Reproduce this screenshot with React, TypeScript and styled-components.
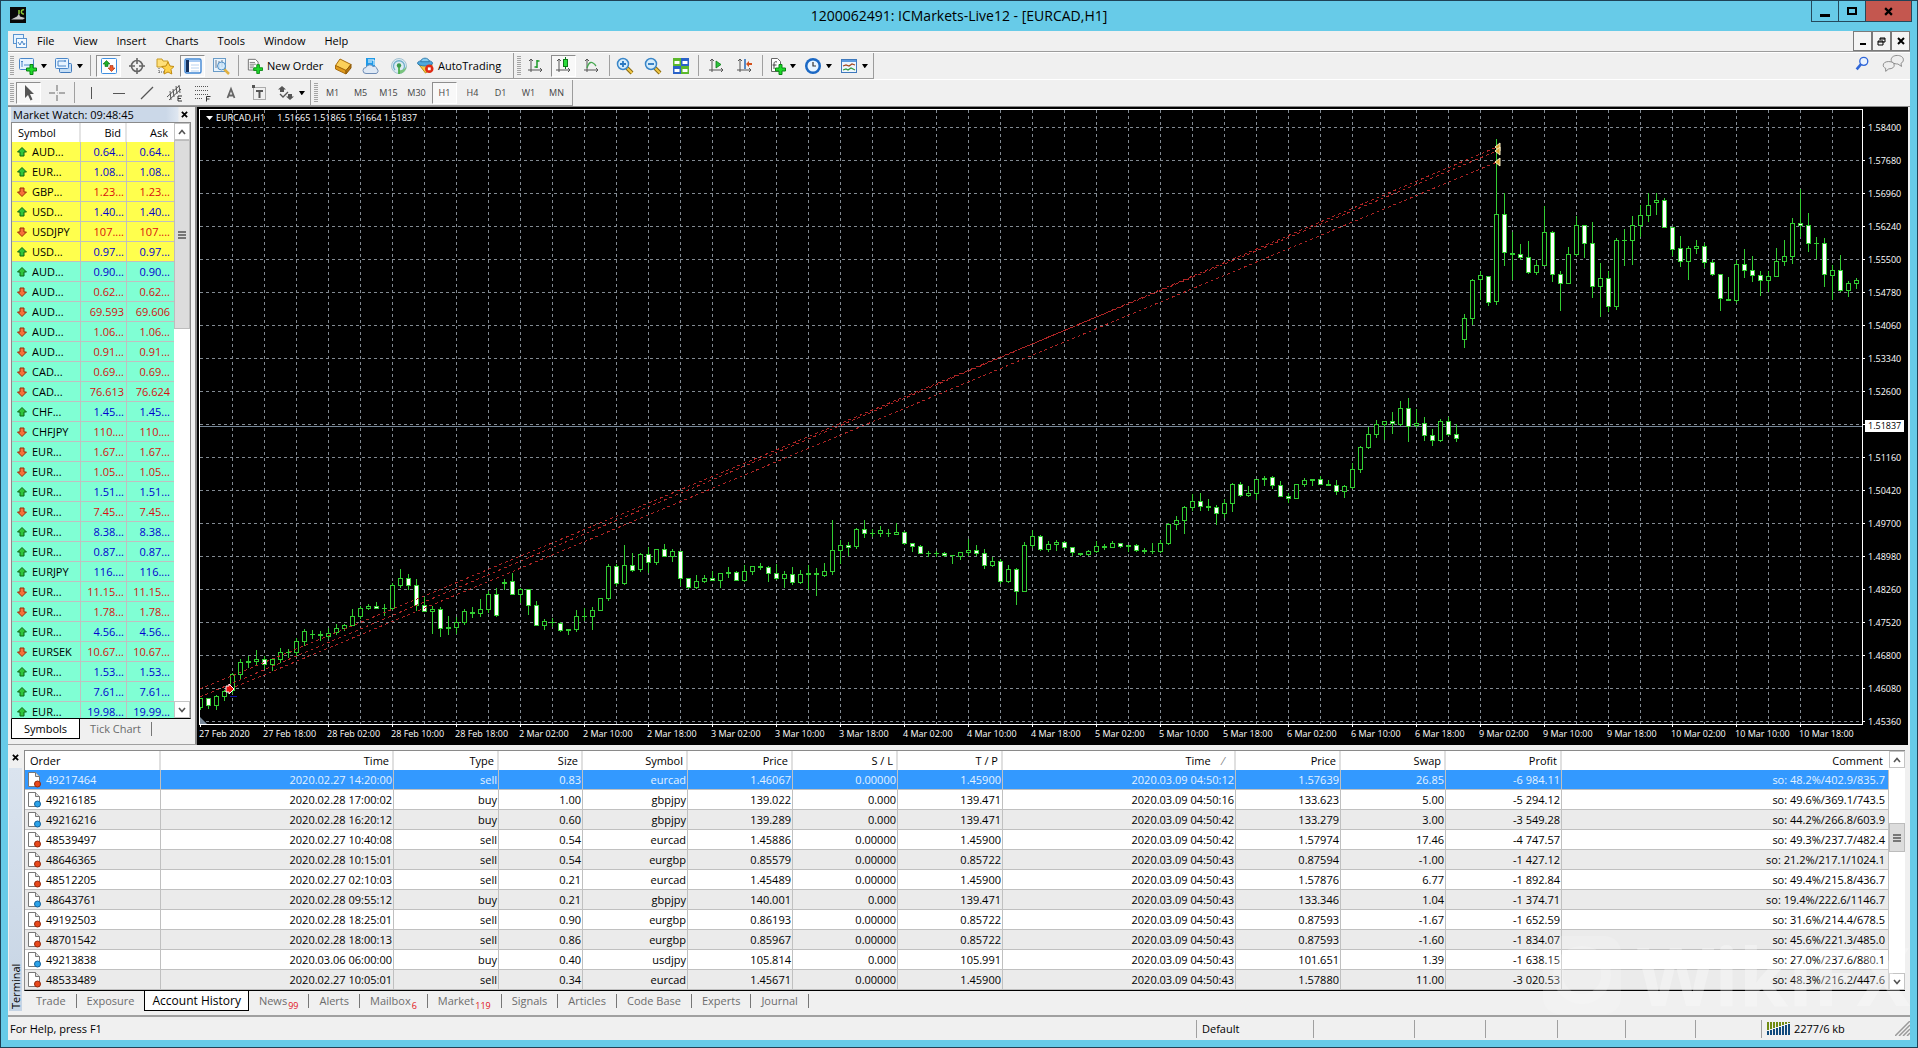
import React from "react";
import styled, { createGlobalStyle, css } from "styled-components";

const GlobalStyle = createGlobalStyle`
  *, *::before, *::after { box-sizing: border-box; }
  body {
    margin: 0;
    font-family: "Open Sans", "Noto Sans", sans-serif;
    font-size: 11px;
    line-height: 16px;
    color: #000;
    background: #67cbe8;
  }
  button { font: inherit; color: inherit; padding: 0; border: 0; background: none; }
`;

/* ---------- window ---------- */

const AppWindow = styled.div`
  height: 100vh;
  display: flex;
  flex-direction: column;
  background: #67cbe8;
  border: 1px solid #1f4256;
  padding: 0 7px 7px;
  overflow: hidden;
`;

const TitleBar = styled.header`
  display: grid;
  grid-template-columns: 1fr auto 1fr;
  align-items: start;
  height: 30px;
  flex: none;
`;

const AppLogo = styled.svg`
  margin: 6px 0 0 2px;
`;

const WindowTitle = styled.h1`
  margin: 0;
  font-size: 14px;
  font-weight: 400;
  line-height: 30px;
`;

const CaptionButtons = styled.div`
  display: flex;
  justify-self: end;
  margin-right: -2px;
`;

const CaptionButton = styled.button<{ $wide?: boolean }>`
  width: ${(p) => (p.$wide ? 47 : 28)}px;
  height: 21px;
  display: flex;
  align-items: center;
  justify-content: center;
  border: 1px solid #24495c;
  border-top: 0;
  margin-left: -1px;
  background: ${(p) => (p.$wide ? "#c4574f" : "transparent")};
`;

const Client = styled.div`
  flex: 1;
  min-height: 0;
  display: flex;
  flex-direction: column;
  background: #f0f0f0;
  position: relative;
`;

/* ---------- menu ---------- */

const MenuBar = styled.nav`
  display: flex;
  align-items: center;
  gap: 1px;
  height: 21px;
  flex: none;
  padding-left: 5px;
  border-bottom: 1px solid #9c9c9c;
`;

const MenuItem = styled.button`
  padding: 0 9px;
`;

const ChildButtons = styled.div`
  display: flex;
  margin-left: auto;
`;

const ChildButton = styled.button`
  width: 19px;
  height: 20px;
  display: flex;
  align-items: center;
  justify-content: center;
  border: 1px solid #7a7a7a;
  background: #f4f4f4;
`;

/* ---------- toolbars ---------- */

const ToolRow = styled.div`
  display: flex;
  height: 27px;
  flex: none;
  border-top: 1px solid #fff;
`;

const ToolGroup = styled.div`
  display: flex;
  align-items: center;
  padding-left: 3px;
  border-right: 1px solid #9c9c9c;
  border-bottom: 1px solid #9c9c9c;
  &:first-child { padding-left: 2px; }
`;

const Grip = styled.span`
  width: 4px;
  height: 19px;
  margin-right: 2px;
  background: repeating-linear-gradient(#a4a4a4 0 1px, #f0f0f0 1px 2px);
`;

const Divider = styled.span<{ $after?: number }>`
  width: 1px;
  height: 21px;
  margin: 0 ${(p) => p.$after ?? 5}px 0 2px;
  background: #a0a0a0;
`;

const pressed = css`
  border: 1px solid #8e8e8e;
  border-right-color: #fff;
  border-bottom-color: #fff;
  background: #f8f8f8;
`;

const ToolButton = styled.button<{ $on?: boolean; $label?: number; $menu?: boolean }>`
  width: ${(p) => p.$label ?? (p.$menu ? 33 : 25)}px;
  height: 22px;
  margin-right: 3px;
  display: flex;
  align-items: center;
  justify-content: ${(p) => (p.$label ? "flex-start" : "center")};
  gap: ${(p) => (p.$label ? 4 : 3)}px;
  padding-left: ${(p) => (p.$label ? 2 : 0)}px;
  border: 1px solid transparent;
  white-space: nowrap;
  ${(p) => p.$on && pressed}
`;

const PeriodButton = styled(ToolButton)`
  font-size: 9px;
  color: #444;
`;

const ToolsEnd = styled.div`
  margin-left: auto;
  display: flex;
  align-items: center;
  gap: 12px;
  padding-right: 6px;
`;

/* ---------- work area ---------- */

const Workspace = styled.div`
  flex: 1;
  min-height: 0;
  display: flex;
  border-top: 1px solid #8a8a8a;
`;

const WatchPanel = styled.section`
  width: 189px;
  flex: none;
  display: flex;
  flex-direction: column;
  padding: 0 4px 5px 3px;
  border-right: 2px solid #8a8a8a;
  border-bottom: 1px solid #a0a0a0;
`;

const WatchTitle = styled.div`
  display: flex;
  align-items: center;
  justify-content: space-between;
  height: 15px;
  flex: none;
  padding: 0 1px 0 2px;
  background: linear-gradient(90deg, #cbd8e8 0 155px, #dfe7f1 167px, #f0f0f0 168px);
  h2 { margin: 0; font-size: 11px; font-weight: 400; }
`;

const CloseButton = styled.button`
  width: 11px;
  height: 14px;
  display: flex;
  align-items: center;
  justify-content: center;
`;

const WatchBody = styled.div`
  flex: 1;
  min-height: 0;
  display: flex;
  border: 1px solid #8a8a8a;
  border-bottom: 1px solid #000;
`;

const WatchScroller = styled.div`
  flex: 1;
  overflow: hidden;
`;

const WatchTable = styled.table`
  width: 100%;
  table-layout: fixed;
  border-collapse: separate;
  border-spacing: 0;
  th {
    height: 19px;
    padding: 0 4px 0 6px;
    font-weight: 400;
    text-align: right;
    background: #fff;
    border-right: 2px solid #e4e4e4;
  }
  th:first-child { text-align: left; }
  th:last-child { border-right: 0; padding-right: 6px; }
`;

const WatchRow = styled.tr<{ $group: "major" | "cross"; $up: boolean }>`
  background: ${(p) => (p.$group === "major" ? "#ffff4d" : "#80ffd4")};
  td {
    height: 20px;
    padding: 0 2px 0 0;
    text-align: right;
    line-height: 18px;
    border-right: 1px solid #c0c0c0;
    border-bottom: 1px solid #c0c0c0;
    color: ${(p) => (p.$up ? "#0000d0" : "#d81010")};
  }
  td:first-child { color: #000; }
  td:last-child { border-right: 0; padding-right: 4px; }
`;

const SymbolCell = styled.span`
  display: flex;
  align-items: center;
  gap: 4px;
  padding-left: 4px;
`;

const ScrollBar = styled.div`
  width: 16px;
  flex: none;
  display: flex;
  flex-direction: column;
  background: #fff;
`;

const ScrollButton = styled.button`
  height: 17px;
  flex: none;
  display: flex;
  align-items: center;
  justify-content: center;
  background: #fff;
  border: 1px solid #c4c4c4;
`;

const Thumb = styled.div<{ $size: number }>`
  height: ${(p) => p.$size}px;
  flex: none;
  display: flex;
  align-items: center;
  justify-content: center;
  background: #dcdcdc;
  border: 1px solid #bcbcbc;
`;

const Track = styled.div<{ $grow?: number }>`
  flex: ${(p) => p.$grow ?? 1};
`;

const WatchTabs = styled.div`
  display: flex;
  align-items: center;
  height: 20px;
  flex: none;
  color: #6c6c6c;
`;

const WatchTab = styled.button<{ $active?: boolean }>`
  height: 20px;
  padding: 0 10px;
  ${(p) =>
    p.$active &&
    css`
      color: #000;
      background: #fff;
      border: 1px solid #000;
      border-top: 0;
      padding: 0 12px;
    `}
`;

const TabRule = styled.span`
  width: 1px;
  height: 14px;
  background: #777;
`;

/* ---------- chart ---------- */

const ChartFrame = styled.section`
  flex: 1;
  min-width: 0;
  margin-right: 2px;
  display: grid;
  grid-template-columns: minmax(0, 1fr) 45px;
  grid-template-rows: minmax(0, 1fr) 20px;
  padding: 2px 0 0 2px;
  background: #000;
  color: #fff;
  font-size: 9px;
  overflow: hidden;
`;

const Plot = styled.div`
  position: relative;
  border: 1px solid #fff;
  min-height: 0;
  overflow: hidden;
  > svg { display: block; width: 100%; height: 100%; }
`;

const PlotCaption = styled.div`
  position: absolute;
  top: 0;
  left: 6px;
  display: flex;
  align-items: center;
  gap: 3px;
  span + span { margin-left: 9px; }
`;

const PriceAxis = styled.ol`
  grid-row: 1 / span 2;
  grid-column: 2;
  position: relative;
  margin: 0;
  padding: 2px 0 0;
  list-style: none;
  li {
    display: flex;
    align-items: center;
    gap: 3px;
    height: 33px;
  }
  li::before { content: ""; width: 2px; height: 1px; background: #fff; }
`;

const PriceTag = styled.output`
  position: absolute;
  left: 2px;
  top: 311px;
  width: 39px;
  height: 12px;
  padding-left: 3px;
  line-height: 12px;
  background: #fff;
  color: #000;
`;

const TimeAxis = styled.ol`
  margin: 0;
  padding: 0;
  list-style: none;
  display: flex;
  overflow: hidden;
  line-height: 14px;
  li {
    flex: none;
    width: 64px;
    white-space: nowrap;
  }
  li::before { content: ""; display: block; width: 1px; height: 2px; margin-left: 1px; background: #fff; }
`;

/* ---------- terminal ---------- */

const TerminalPanel = styled.section`
  flex: none;
  display: flex;
  margin-top: 5px;
  padding: 0 5px 4px 1px;
  border-bottom: 2px solid #a0a0a0;
`;

const TerminalRail = styled.div`
  width: 13px;
  flex: none;
  display: flex;
  flex-direction: column;
  align-items: center;
  margin-right: 2px;
`;

const RailLabel = styled.h2`
  flex: 1;
  width: 100%;
  margin: 4px 0 0;
  display: flex;
  align-items: center;
  writing-mode: vertical-rl;
  transform: rotate(180deg);
  font-size: 11px;
  font-weight: 400;
  line-height: 13px;
  padding-top: 2px;
  background: linear-gradient(#c6d4e4, #dbe4ef);
`;

const TerminalMain = styled.div`
  flex: 1;
  min-width: 0;
`;

const TerminalBody = styled.div`
  display: flex;
  border-top: 1px solid #8a8a8a;
  border-left: 1px solid #8a8a8a;
  border-bottom: 1px solid #000;
`;

const HistoryTable = styled.table`
  flex: 1;
  width: 100%;
  min-width: 0;
  table-layout: fixed;
  border-collapse: separate;
  border-spacing: 0;
  th {
    height: 19px;
    padding: 0 3px 0 5px;
    font-weight: 400;
    text-align: right;
    background: #fff;
    border-right: 2px solid #e0e0e0;
    white-space: pre;
  }
  th:first-child { text-align: left; }
  th:last-child { border-right: 0; padding-right: 6px; }
`;

const HistoryRow = styled.tr<{ $selected: boolean; $shade: boolean }>`
  background: ${(p) => (p.$selected ? "#3399ff" : p.$shade ? "#ebebeb" : "#fff")};
  color: ${(p) => (p.$selected ? "#e4f2ff" : "#000")};
  td {
    height: 20px;
    padding: 0 1px 0 2px;
    line-height: 18px;
    text-align: right;
    white-space: nowrap;
    border-right: 1px solid #c0c0c0;
    border-bottom: 1px solid #c0c0c0;
  }
  td:last-child { padding-right: 3px; }
`;

const OrderCell = styled.span`
  display: flex;
  align-items: center;
  gap: 4px;
  svg { flex: none; }
`;

const SortMark = styled.span`
  margin: 0 7px 0 12px;
  color: #777;
`;

const TerminalTabs = styled.div`
  display: flex;
  align-items: center;
  height: 20px;
  padding-left: 2px;
  color: #6c6c6c;
`;

const TerminalTab = styled.button<{ $active?: boolean }>`
  height: 20px;
  padding: 0 10px;
  display: flex;
  align-items: center;
  sub { font-size: 9px; line-height: 9px; margin-top: 8px; margin-left: 1px; color: #e01020; }
  ${(p) =>
    p.$active &&
    css`
      font-size: 12px;
      color: #000;
      background: #fff;
      border: 1px solid #000;
      border-top: 0;
      padding: 0 7px;
    `}
`;

const StatusBar = styled.footer`
  flex: none;
  display: flex;
  align-items: center;
  height: 23px;
  padding-left: 2px;
`;

const StatusCell = styled.div<{ $width?: number }>`
  ${(p) => (p.$width ? `width: ${p.$width}px; flex: none;` : "flex: 1;")}
  height: 18px;
  display: flex;
  align-items: center;
  gap: 4px;
  & + & { border-left: 1px solid #a0a0a0; padding-left: 5px; }
`;

const ResizeHandle = styled.svg`
  margin-left: auto;
`;

const Watermark = styled.div`
  position: absolute;
  right: 0;
  bottom: 25px;
  display: flex;
  align-items: center;
  gap: 16px;
  color: #fff;
  opacity: 0.3;
  font-size: 80px;
  font-weight: 700;
  line-height: 80px;
  pointer-events: none;
`;

/* ---------- icons ---------- */

type IconName =
  | "newChart" | "profiles" | "watch" | "navigator" | "favorites" | "terminal" | "tester"
  | "order" | "gold" | "cloud" | "signal" | "robot" | "bars" | "candles" | "line"
  | "zoomIn" | "zoomOut" | "tiles" | "scroll" | "shift" | "indicator" | "clock" | "template"
  | "pointer" | "cross" | "vline" | "hline" | "trend" | "channel" | "fibo" | "text" | "label" | "arrows"
  | "search" | "chat";

const plus = <path d="M11 7.500h3v3.500h3.500v3H14v3.500h-3V14H7.500v-3H11z" fill="#1ed82a" stroke="#088512" />;
const axes = <path d="M4 2v13M1 13h14M2 4l2-2 2 2M13 11l2 2-2 2" fill="none" stroke="#555" />;
const lens = (
  <>
    <path d="M11 11l5 5" stroke="#8a6a10" strokeWidth="4" />
    <path d="M11 11l5 5" stroke="#f2c94a" strokeWidth="2" />
    <circle cx="7" cy="7" r="5.5" fill="#d5edfc" stroke="#3a86c8" strokeWidth="1.5" />
  </>
);

const ICONS: Record<IconName, React.ReactNode> = {
  newChart: (
    <>
      <rect x="0.5" y="1.5" width="14" height="11" rx="1" fill="#e6f3ff" stroke="#4a86c8" />
      <path d="M3 4v6M2 5l1-1 1 1M5 8h7" fill="none" stroke="#4a86c8" />
      {plus}
    </>
  ),
  profiles: (
    <>
      <rect x="4.5" y="6.5" width="12" height="9" rx="1" fill="#c5def5" stroke="#3f79bc" />
      <rect x="0.5" y="1.5" width="13" height="10" rx="1" fill="#e6f3ff" stroke="#4a86c8" />
      <path d="M3 4h8M3 9h8M3 4v5M10 3v2" fill="none" stroke="#4a86c8" />
    </>
  ),
  watch: (
    <>
      <rect x="1.5" y="1.5" width="15" height="15" rx="1" fill="#fff" stroke="#3f8fe0" />
      <path d="M6.500 3.500l3.500 3.500H8v2.500H5V7H3z" fill="#1fae2b" stroke="#0b6c12" strokeWidth="0.6" />
      <path d="M11.500 14.500L8 11h2V8.500h3V11h2z" fill="#ef5a2a" stroke="#a12a08" strokeWidth="0.6" />
    </>
  ),
  navigator: (
    <g fill="none" stroke="#666" strokeWidth="1.6">
      <circle cx="9" cy="9" r="5.5" />
      <path d="M9 1v6M9 11v6M1 9h6M11 9h6" />
    </g>
  ),
  favorites: (
    <>
      <path d="M1 2h5l1 2h5v6H1z" fill="#ffe07a" stroke="#c79a22" />
      <path d="M3 11v5M3 15h5" fill="none" stroke="#555" strokeDasharray="1 1" />
      <path d="M12 5l2 4 4 .5-3 3 .8 4.500L12 15l-4 2 .8-4.500-3-3L10 9z" fill="#ffd24a" stroke="#c08a10" />
    </>
  ),
  terminal: (
    <>
      <rect x="1" y="2" width="16" height="14" rx="1.5" fill="#fff" stroke="#3f86d4" strokeWidth="1.4" />
      <rect x="2" y="3" width="3" height="12" fill="#16305c" />
      <path d="M5 4h11" stroke="#8ab8ee" strokeWidth="1.500" />
      <path d="M7 8h8M7 11h8M7 14h8" stroke="#b8d2f0" />
    </>
  ),
  tester: (
    <>
      <rect x="1.500" y="1.500" width="12" height="13" fill="#e9f4fd" stroke="#6a9cc8" />
      <path d="M4 3v8M7 4v8M10 3v7" stroke="#6a7f94" />
      <path d="M12 12l5 5" stroke="#e0b040" strokeWidth="2.500" />
      <circle cx="9.500" cy="9" r="4" fill="#cfe8fb" fillOpacity="0.8" stroke="#4f90c8" />
    </>
  ),
  order: (
    <>
      <path d="M1.500 1.500h8l3 3v9h-11z" fill="#fff" stroke="#666" />
      <path d="M3 5h6M3 7h7M3 9h5M3 11h4" stroke="#777" />
      {plus}
    </>
  ),
  gold: (
    <>
      <path d="M1.500 8.500L6 2l11 5.500-5 6z" fill="#fbd05a" stroke="#a86c0c" />
      <path d="M1.500 8.500l10.500 5v3.500L1.500 12z" fill="#e09a1c" stroke="#a86c0c" />
      <path d="M12 13.500l5-6V11l-5 6z" fill="#b8760c" stroke="#8c5808" />
    </>
  ),
  cloud: (
    <>
      <path d="M4 1h9v9H4z" fill="#1f9ae8" />
      <path d="M6 3h6M6 5h4M12 3v5" stroke="#fff" />
      <path d="M4 16.500a3 3 0 0 1 0-6 4 4 0 0 1 7-1 3 3 0 0 1 4 2.500 2.500 2.500 0 0 1-1 4.500z" fill="#dfe9f5" stroke="#6f8db6" />
    </>
  ),
  signal: (
    <g fill="none">
      <circle cx="9" cy="9" r="7.500" fill="#dcebf2" stroke="#a4c2d2" />
      <path d="M5 13a5.500 5.500 0 1 1 8 0" stroke="#6faecb" strokeWidth="1.300" />
      <path d="M9 17a8 8 0 0 0 7.500-8A7 7 0 0 1 9 13z" fill="#79c47c" />
      <path d="M9 9v8" stroke="#4cb04c" strokeWidth="1.800" />
      <circle cx="9" cy="8.500" r="2.200" fill="#3b9a4a" />
    </g>
  ),
  robot: (
    <>
      <path d="M2 8l7 9 6-4 1-5z" fill="#f6c840" stroke="#b88a10" />
      <ellipse cx="8.500" cy="6.500" rx="8" ry="3" fill="#4fa8dc" stroke="#2a78ac" />
      <path d="M4 5c0-5 9-5 9 0z" fill="#86ccf0" stroke="#2a78ac" />
      <circle cx="13" cy="12.500" r="4.500" fill="#e02a14" />
      <rect x="11.500" y="11" width="3" height="3" fill="#fff" />
    </>
  ),
  bars: <>{axes}<path d="M10 3v8M10 4h2.500M7.500 10H10" stroke="#1c9a28" strokeWidth="1.500" /></>,
  candles: <>{axes}<path d="M10.500 0v12" stroke="#0d7a18" /><rect x="8.500" y="2.500" width="4" height="7" fill="#2bdc3a" stroke="#0d7a18" /></>,
  line: <>{axes}<path d="M4 11c2-7 5-7 9-2" fill="none" stroke="#46a850" strokeWidth="1.300" /></>,
  zoomIn: <>{lens}<path d="M7 4v6M4 7h6" stroke="#2a78c0" strokeWidth="1.800" /></>,
  zoomOut: <>{lens}<path d="M4 7h6" stroke="#2a78c0" strokeWidth="1.800" /></>,
  tiles: (
    <>
      <path d="M1 1h8v8H1zM9 9h8v8H9z" fill="#5cb82c" />
      <path d="M9 1h8v8H9zM1 9h8v8H1z" fill="#2a62c8" />
      <path d="M2.500 5.500h5M10.500 5.500h5M2.500 13.500h5M10.500 13.500h5" stroke="#fff" strokeWidth="3" />
    </>
  ),
  scroll: <>{axes}<path d="M8 4l5 3.500-5 3.500z" fill="#2bc43a" stroke="#0d7a18" strokeWidth="0.800" /></>,
  shift: <>{axes}<path d="M9 2v10" stroke="#2468b8" strokeWidth="1.500" /><path d="M10 7l3-3v2h3v2h-3v2z" fill="#d4501a" /></>,
  indicator: (
    <>
      <path d="M3.500 1.500h6l3 3v10h-9z" fill="#fff" stroke="#666" />
      <path d="M9 5c-3-1-3 1-3 3v4M4.500 8h4" fill="none" stroke="#444" />
      {plus}
    </>
  ),
  clock: (
    <>
      <circle cx="9" cy="9" r="8" fill="#1b68c4" />
      <circle cx="9" cy="9" r="5.500" fill="#e8f4ff" />
      <path d="M9 5v4h3" fill="none" stroke="#333" strokeWidth="1.200" />
    </>
  ),
  template: (
    <>
      <rect x="1.500" y="2.500" width="15" height="13" fill="#eef6fd" stroke="#3f79bc" />
      <path d="M2 4h14" stroke="#5a9ae0" strokeWidth="2" />
      <path d="M3 9l3-1 3 1 3-2 3 1" fill="none" stroke="#a04820" strokeWidth="1.200" />
      <path d="M3 13l3-1 2 1 3-2 4 2" fill="none" stroke="#2c9a3a" strokeWidth="1.200" />
    </>
  ),
  pointer: <path d="M5 1v13l3-3 2.500 5.500 2-1L10 10h4z" fill="#555" />,
  cross: <path d="M9 1v6M9 11v6M1 9h6M11 9h6M9 9h.5" stroke="#666" />,
  vline: <path d="M9.500 3v12" stroke="#555" />,
  hline: <path d="M3 9.500h12" stroke="#555" />,
  trend: <path d="M3 15L15 3" stroke="#555" strokeWidth="1.200" />,
  channel: (
    <>
      <path d="M1 13L13 2M3 16L15 5M4 7l1 9M7 5l1 8M10 2l1 8M13 1l1 8" stroke="#555" fill="none" />
      <path d="M16 12h-4v5h4M12 14.500h3" fill="none" stroke="#333" />
    </>
  ),
  fibo: (
    <>
      <path d="M1 2.500h14M1 6.500h14M1 10.500h14M1 14.500h8" stroke="#555" strokeDasharray="1 1" />
      <path d="M12.500 17.500v-5h4M12.500 15h3" fill="none" stroke="#333" />
    </>
  ),
  text: <path d="M5.500 14L9 5l3.500 9M6.500 11.500h5" fill="none" stroke="#666" strokeWidth="1.800" />,
  label: (
    <>
      <rect x="3.500" y="3.500" width="12" height="12" fill="none" stroke="#666" strokeDasharray="1 1" />
      <path d="M6 7h7M9.500 7v7" stroke="#555" strokeWidth="2" />
      <path d="M2 1h3v3H2z" fill="#555" />
    </>
  ),
  arrows: (
    <>
      <path d="M5 2l4 3.500H7V8H3V5.500H1z" fill="#555" />
      <path d="M3 10l3 3 5-5" fill="none" stroke="#555" strokeWidth="1.300" />
      <path d="M13 16l-4-3.500h2V10h4v2.500h2z" fill="#555" />
    </>
  ),
  search: (
    <g fill="none" stroke="#2f66d8">
      <circle cx="11" cy="6" r="4.500" fill="#eaf3ff" strokeWidth="1.500" />
      <path d="M8 9l-5 6" strokeWidth="3" />
    </g>
  ),
  chat: (
    <g fill="#eee" stroke="#8a8a8a" strokeWidth="0.800">
      <path d="M12.500 2c3 0 5 1.500 5 3.500 0 1.500-1 2.500-2 3l.5 2.500-3-2c-3.500 0-5.500-1.500-5.500-3.500s2-3.500 5-3.500z" />
      <path d="M5.500 7c3 0 4.500 1.300 4.500 3s-1.500 3-4.500 3L3 15v-2.500c-1.500-.5-2-1.500-2-2.500 0-1.700 1.500-3 4.500-3z" />
    </g>
  ),
};

function Icon({ name, size = 18 }: { name: IconName; size?: number }) {
  return (
    <svg width={size} height={size} viewBox="0 0 18 18" aria-hidden="true">
      {ICONS[name]}
    </svg>
  );
}

function Caret() {
  return (
    <svg width="7" height="4" viewBox="0 0 7 4" aria-hidden="true">
      <path d="M1 0h6L4 4H3.500z" fill="#000" />
    </svg>
  );
}

function CrossMark({ size = 8, weight = 2 }: { size?: number; weight?: number }) {
  return (
    <svg width={size} height={size} viewBox="0 0 8 8" aria-hidden="true">
      <path d="M1 1l6 6M7 1L1 7" stroke="#000" strokeWidth={weight} />
    </svg>
  );
}

function Chevron({ down }: { down?: boolean }) {
  return (
    <svg width="8" height="6" viewBox="0 0 8 6" aria-hidden="true">
      <path d={down ? "M1 1l3 3.500L7 1" : "M1 5l3-3.500L7 5"} fill="none" stroke="#555" strokeWidth="1.600" />
    </svg>
  );
}

function Ridges() {
  return (
    <svg width="8" height="8" viewBox="0 0 8 8" aria-hidden="true">
      <path d="M0 1h8M0 4h8M0 7h8" stroke="#555" strokeWidth="1.500" />
    </svg>
  );
}

function Trend({ up }: { up: boolean }) {
  return (
    <svg width="12" height="10" viewBox="0 0 12 10" aria-hidden="true">
      {up ? (
        <path d="M6 .5L10.500 5H8v4H4V5H1.500z" fill="#2fc43a" stroke="#0c6614" />
      ) : (
        <path d="M6 9.500L10.500 5H8V1H4v4H1.500z" fill="#f4703a" stroke="#9a2c08" />
      )}
    </svg>
  );
}

function OrderIcon({ sell }: { sell: boolean }) {
  return (
    <svg width="15" height="17" viewBox="0 0 15 17" aria-hidden="true">
      <path d="M1.500 1.500h7l4 4v10h-11z" fill="#fff" stroke="#777" />
      <path d="M8.500 1.500v4h4" fill="#ddd" stroke="#777" />
      <circle cx="10.500" cy="13" r="3" fill={sell ? "#e8481c" : "#2ba2e8"} stroke={sell ? "#96280a" : "#12609c"} />
    </svg>
  );
}

/* ---------- data ---------- */

const WATCH = `AUD...,0.64...,0.64...,u
EUR...,1.08...,1.08...,u
GBP...,1.23...,1.23...,d
USD...,1.40...,1.40...,u
USDJPY,107....,107....,d
USD...,0.97...,0.97...,u
AUD...,0.90...,0.90...,u
AUD...,0.62...,0.62...,d
AUD...,69.593,69.606,d
AUD...,1.06...,1.06...,d
AUD...,0.91...,0.91...,d
CAD...,0.69...,0.69...,d
CAD...,76.613,76.624,d
CHF...,1.45...,1.45...,u
CHFJPY,110....,110....,d
EUR...,1.67...,1.67...,d
EUR...,1.05...,1.05...,d
EUR...,1.51...,1.51...,u
EUR...,7.45...,7.45...,d
EUR...,8.38...,8.38...,u
EUR...,0.87...,0.87...,u
EURJPY,116....,116....,u
EUR...,11.15...,11.15...,d
EUR...,1.78...,1.78...,d
EUR...,4.56...,4.56...,u
EURSEK,10.67...,10.67...,d
EUR...,1.53...,1.53...,u
EUR...,7.61...,7.61...,u
EUR...,19.98...,19.99...,u`
  .split("\n")
  .map((r) => r.split(","));

const MAJORS = 6;

const HISTORY = `49217464|2020.02.27 14:20:00|sell|0.83|eurcad|1.46067|0.00000|1.45900|2020.03.09 04:50:12|1.57639|26.85|-6 984.11|so: 48.2%/402.9/835.7
49216185|2020.02.28 17:00:02|buy|1.00|gbpjpy|139.022|0.000|139.471|2020.03.09 04:50:16|133.623|5.00|-5 294.12|so: 49.6%/369.1/743.5
49216216|2020.02.28 16:20:12|buy|0.60|gbpjpy|139.289|0.000|139.471|2020.03.09 04:50:42|133.279|3.00|-3 549.28|so: 44.2%/266.8/603.9
48539497|2020.02.27 10:40:08|sell|0.54|eurcad|1.45886|0.00000|1.45900|2020.03.09 04:50:42|1.57974|17.46|-4 747.57|so: 49.3%/237.7/482.4
48646365|2020.02.28 10:15:01|sell|0.54|eurgbp|0.85579|0.00000|0.85722|2020.03.09 04:50:43|0.87594|-1.00|-1 427.12|so: 21.2%/217.1/1024.1
48512205|2020.02.27 02:10:03|sell|0.21|eurcad|1.45489|0.00000|1.45900|2020.03.09 04:50:43|1.57876|6.77|-1 892.84|so: 49.4%/215.8/436.7
48643761|2020.02.28 09:55:12|buy|0.21|gbpjpy|140.001|0.000|139.471|2020.03.09 04:50:43|133.346|1.04|-1 374.71|so: 19.4%/222.6/1146.7
49192503|2020.02.28 18:25:01|sell|0.90|eurgbp|0.86193|0.00000|0.85722|2020.03.09 04:50:43|0.87593|-1.67|-1 652.59|so: 31.6%/214.4/678.5
48701542|2020.02.28 18:00:13|sell|0.86|eurgbp|0.85967|0.00000|0.85722|2020.03.09 04:50:43|0.87593|-1.60|-1 834.07|so: 45.6%/221.3/485.0
49213838|2020.03.06 06:00:00|buy|0.40|usdjpy|105.814|0.000|105.991|2020.03.09 04:50:43|101.651|1.39|-1 638.15|so: 27.0%/237.6/880.1
48533489|2020.02.27 10:05:01|sell|0.34|eurcad|1.45671|0.00000|1.45900|2020.03.09 04:50:43|1.57880|11.00|-3 020.53|so: 48.3%/216.2/447.6`
  .split("\n")
  .map((r) => r.split("|"));

const COLUMNS: [string, number?][] = [
  ["Order", 136], ["Time", 233], ["Type", 105], ["Size", 84], ["Symbol", 105],
  ["Price", 105], ["S / L", 105], ["T / P", 105], ["Time", 233], ["Price", 105],
  ["Swap", 105], ["Profit", 116], ["Comment"],
];

const TABS: { name: string; badge?: number }[] = [
  { name: "Trade" }, { name: "Exposure" }, { name: "Account History" }, { name: "News", badge: 99 },
  { name: "Alerts" }, { name: "Mailbox", badge: 6 }, { name: "Market", badge: 119 }, { name: "Signals" },
  { name: "Articles" }, { name: "Code Base" }, { name: "Experts" }, { name: "Journal" },
];
const ACTIVE_TAB = 2;

const STATUS_WIDTHS = [101, 71, 72, 68, 70, 66];

const PRICES = [
  "1.58400", "1.57680", "1.56960", "1.56240", "1.55500", "1.54780", "1.54060", "1.53340", "1.52600", "",
  "1.51160", "1.50420", "1.49700", "1.48980", "1.48260", "1.47520", "1.46800", "1.46080", "1.45360",
];

const TIMES = [
  "27 Feb 2020", "27 Feb 18:00",
  ...["28 Feb", "2 Mar", "3 Mar", "4 Mar", "5 Mar", "6 Mar", "9 Mar", "10 Mar"].flatMap((d) =>
    ["02:00", "10:00", "18:00"].map((t) => `${d} ${t}`)
  ),
];

/* Hourly candles: h = rising (hollow), f = falling (filled); high, body top, body bottom, low. */
const CANDLES = `h698,698,708,710 f698,698,706,709 h695,696,706,710 h690,691,697,701 h673,674,691,694 h659,662,675,679
f656,661,663,668 h650,659,662,665 f656,659,665,669 h659,659,665,671 h648,652,660,663 f649,652,653,658 h638,641,653,656
h629,631,642,646 f630,634,635,639 f631,634,636,641 h628,633,637,639 h624,628,633,635 h624,625,629,631 h609,616,626,626
h606,608,617,619 h604,606,609,610 f602,606,609,609 f604,608,609,616 h583,585,609,610 h569,578,586,588 f574,578,586,590
f579,585,606,611 f597,605,612,612 h606,609,612,634 f607,609,629,637 f616,627,629,635 h617,622,628,634 h609,611,623,625
f607,612,614,618 h599,609,614,617 h591,594,610,613 f588,594,616,617 f579,582,584,590 f573,581,595,595 h588,589,595,603
f589,589,606,615 f601,605,626,626 h619,621,626,630 f618,622,623,627 f622,623,631,632 f629,629,631,635 h610,616,630,632
f608,616,617,621 h607,610,617,630 h598,598,611,611 h564,566,599,601 f564,566,584,586 h545,565,584,585 f553,565,571,572
h553,554,570,572 f547,554,563,573 h549,549,563,565 f544,549,557,557 h549,551,557,562 f551,551,579,586 f578,578,588,589
h575,581,588,589 h575,578,582,583 f571,578,581,581 h573,573,581,588 f567,572,574,578 f571,572,581,581 h565,571,581,582
h566,566,572,575 f563,566,568,570 f566,567,574,582 f564,573,579,580 h571,574,579,588 f567,574,583,585 h570,574,583,584
f565,573,575,590 f568,573,575,596 h563,571,576,577 h520,550,572,575 h540,545,551,564 f542,545,548,556 h528,529,547,549
f520,529,534,538 f529,533,534,537 h526,530,534,537 f529,533,534,537 h523,532,535,535 f531,532,544,545 f543,543,547,552
f545,546,554,554 f551,553,554,557 f551,553,554,557 f552,553,556,557 f555,555,556,564 h552,552,557,560 h539,550,553,556
f545,550,554,556 f549,553,566,569 h557,561,566,567 f559,561,582,584 h565,569,582,583 f568,569,592,605 h542,545,592,592
h530,536,546,548 f535,536,550,551 h541,544,550,552 h540,542,545,551 f541,542,548,549 f547,547,553,556 f553,553,555,556
h550,551,555,556 h541,546,552,553 f544,546,548,550 h541,543,548,548 f543,543,547,548 f545,545,547,552 f544,545,551,552
f548,550,552,554 f543,551,552,554 h540,543,552,553 h523,524,544,545 h516,520,525,530 h506,507,521,534 h494,501,508,511
f493,501,507,511 f499,506,508,511 f505,507,514,525 h499,503,514,518 h483,484,504,512 f482,484,496,497 h486,493,496,497
h479,479,494,500 f476,478,480,486 f476,477,486,489 f481,485,497,497 f493,496,499,503 h484,484,499,499 h478,480,485,487
f479,479,481,486 f476,479,485,485 f480,484,486,486 f480,485,492,495 h485,486,492,498 h463,469,488,489 h446,447,470,473
h427,434,448,449 h420,424,435,438 h421,421,425,440 f412,421,424,434 h401,408,425,426 f398,408,427,442 h409,423,426,428
f417,423,436,441 f429,435,441,446 h419,421,441,442 f417,421,435,436 f424,434,439,442 h314,318,340,348 h279,280,319,325
h271,275,280,300 f276,276,303,306 h139,214,302,305 f193,214,253,266 f232,253,255,280 f244,254,258,260 f241,257,273,274
h260,265,273,275 h206,232,266,266 f231,232,275,282 f271,274,284,311 h247,254,284,284 h216,225,255,256 f225,225,244,258
f222,243,287,298 h263,278,287,317 f271,278,307,312 h238,240,307,310 f229,240,241,266 h216,225,241,265 h205,215,226,237
h193,205,216,222 h193,200,203,215 f198,200,228,228 f227,227,250,256 f236,248,262,267 h246,248,262,280 h240,246,249,254
f243,246,263,268 f260,262,275,276 f274,274,299,311 f277,299,301,301 h260,264,301,303 f249,264,271,278 f256,270,276,282
f271,275,281,296 h271,276,281,292 h248,261,277,277 h240,256,262,266 h218,223,257,264 f189,223,226,237 f213,225,244,252
f237,243,244,259 f238,243,275,287 h265,270,276,300 f255,270,291,292 h281,283,291,297 h278,280,284,289`
  .split(/\s+/)
  .map((c) => {
    const [high, top, bottom, low] = c.slice(1).split(",").map((v) => Number(v) - 110);
    return { falling: c[0] === "f", high, top, bottom, low };
  });

/* ---------- parts ---------- */

function Chart() {
  return (
    <ChartFrame aria-label="EURCAD H1 chart">
      <Plot>
        <svg role="img" aria-label="Candlestick chart" shapeRendering="crispEdges">
          <defs>
            <pattern id="cols" width="32" height="6" patternUnits="userSpaceOnUse">
              <rect width="1" height="3" fill="#828a92" />
            </pattern>
            <pattern id="rows" width="6" height="33" y="17" patternUnits="userSpaceOnUse">
              <rect width="3" height="1" fill="#828a92" />
            </pattern>
          </defs>
          <rect x="1" width="100%" height="100%" fill="url(#cols)" />
          <rect width="100%" height="100%" fill="url(#rows)" />
          <rect y="316" width="100%" height="1" fill="#778899" />
          {CANDLES.map((c, i) => (
            <g key={i} fill="#32cd32">
              <rect x={i * 8} y={c.high} width="1" height={Math.max(1, c.low - c.high)} />
              <rect x={i * 8 - 2} y={c.top} width="5" height={c.bottom - c.top} />
              {c.bottom - c.top > 2 && (
                <rect
                  x={i * 8 - 1}
                  y={c.top + 1}
                  width="3"
                  height={c.bottom - c.top - 2}
                  fill={c.falling ? "#fff" : "#000"}
                />
              )}
            </g>
          ))}
          <g stroke="#b02626" strokeDasharray="3 3" fill="none">
            <path d="M0 579L1297 41" />
            <path d="M0 587L1297 37" />
            <path d="M30 579L1297 52" />
          </g>
          <path d="M30 586h7" stroke="#1010a0" />
          <g shapeRendering="auto">
            <path d="M29 576v-2l5 5-5 5v-2h-3v-6z" fill="#e81010" stroke="#fff" />
            {[37, 41, 52].map((y) => (
              <path key={y} d={`M1295 ${y}l5-4v8z`} fill="#d8a030" stroke="#f8ecc0" strokeWidth="1" />
            ))}
            <path d="M0 607l7 7H0z" fill="#778899" />
          </g>
        </svg>
        <PlotCaption>
          <svg width="7" height="4" viewBox="0 0 7 4" aria-hidden="true">
            <path d="M0 0h7L3.500 4z" fill="#fff" />
          </svg>
          <span>EURCAD,H1</span>
          <span>1.51665 1.51865 1.51664 1.51837</span>
        </PlotCaption>
      </Plot>
      <PriceAxis>
        {PRICES.map((p, i) => (
          <li key={i}>{p}</li>
        ))}
        <PriceTag>1.51837</PriceTag>
      </PriceAxis>
      <TimeAxis>
        {TIMES.map((t) => (
          <li key={t}>{t}</li>
        ))}
      </TimeAxis>
    </ChartFrame>
  );
}

function MarketWatch() {
  return (
    <WatchPanel>
      <WatchTitle>
        <h2>Market Watch: 09:48:45</h2>
        <CloseButton aria-label="Close Market Watch"><CrossMark size={7} /></CloseButton>
      </WatchTitle>
      <WatchBody>
        <WatchScroller>
          <WatchTable>
            <colgroup>
              <col width="69" />
              <col width="46" />
              <col />
            </colgroup>
            <thead>
              <tr><th>Symbol</th><th>Bid</th><th>Ask</th></tr>
            </thead>
            <tbody>
              {WATCH.map(([symbol, bid, ask, dir], i) => (
                <WatchRow key={i} $group={i < MAJORS ? "major" : "cross"} $up={dir === "u"}>
                  <td><SymbolCell><Trend up={dir === "u"} />{symbol}</SymbolCell></td>
                  <td>{bid}</td>
                  <td>{ask}</td>
                </WatchRow>
              ))}
            </tbody>
          </WatchTable>
        </WatchScroller>
        <ScrollBar>
          <ScrollButton aria-label="Scroll up"><Chevron /></ScrollButton>
          <Thumb $size={189}><Ridges /></Thumb>
          <Track />
          <ScrollButton aria-label="Scroll down"><Chevron down /></ScrollButton>
        </ScrollBar>
      </WatchBody>
      <WatchTabs>
        <WatchTab $active>Symbols</WatchTab>
        <WatchTab>Tick Chart</WatchTab>
        <TabRule />
      </WatchTabs>
    </WatchPanel>
  );
}

function Terminal() {
  return (
    <TerminalPanel>
      <TerminalRail>
        <CloseButton aria-label="Close Terminal"><CrossMark size={7} /></CloseButton>
        <RailLabel>Terminal</RailLabel>
      </TerminalRail>
      <TerminalMain>
        <TerminalBody>
          <HistoryTable>
            <colgroup>
              {COLUMNS.map(([, width], i) => <col key={i} width={width} />)}
            </colgroup>
            <thead>
              <tr>
                {COLUMNS.map(([name], i) => (
                  <th key={i}>{name}{i === 8 && <SortMark>⁄</SortMark>}</th>
                ))}
              </tr>
            </thead>
            <tbody>
              {HISTORY.map((row, r) => (
                <HistoryRow key={row[0]} $selected={r === 0} $shade={r % 2 === 0}>
                  {row.map((cell, c) => (
                    <td key={c}>
                      {c === 0 ? <OrderCell><OrderIcon sell={row[2] === "sell"} />{cell}</OrderCell> : cell}
                    </td>
                  ))}
                </HistoryRow>
              ))}
            </tbody>
          </HistoryTable>
          <ScrollBar>
            <ScrollButton aria-label="Scroll up"><Chevron /></ScrollButton>
            <Track $grow={5} />
            <Thumb $size={29}><Ridges /></Thumb>
            <Track $grow={11} />
            <ScrollButton aria-label="Scroll down"><Chevron down /></ScrollButton>
          </ScrollBar>
        </TerminalBody>
        <TerminalTabs>
          {TABS.map((tab, i) => (
            <React.Fragment key={tab.name}>
              <TerminalTab $active={i === ACTIVE_TAB}>
                {tab.name}
                {tab.badge && <sub>{tab.badge}</sub>}
              </TerminalTab>
              {i !== ACTIVE_TAB && i !== ACTIVE_TAB - 1 && <TabRule />}
            </React.Fragment>
          ))}
        </TerminalTabs>
      </TerminalMain>
    </TerminalPanel>
  );
}

function Tool({ icon, name, on }: { icon: IconName; name: string; on?: boolean }) {
  return <ToolButton $on={on} aria-label={name}><Icon name={icon} /></ToolButton>;
}

function MenuTool({ icon, name }: { icon: IconName; name: string }) {
  return <ToolButton $menu aria-label={name}><Icon name={icon} /><Caret /></ToolButton>;
}

export default function App() {
  return (
    <>
      <GlobalStyle />
      <AppWindow>
        <TitleBar>
          <AppLogo width="16" height="16" viewBox="0 0 16 16" aria-hidden="true">
            <rect width="16" height="16" fill="#080808" />
            <path d="M1 12.500l6-3 2-3 1 3 5 1.500-2 1.500z" fill="#c8c8c8" />
            <path d="M9 3v4M14 3c-3-1-4 4 0 4" fill="none" stroke="#8ac83a" strokeWidth="1.500" />
          </AppLogo>
          <WindowTitle>1200062491: ICMarkets-Live12 - [EURCAD,H1]</WindowTitle>
          <CaptionButtons>
            <CaptionButton aria-label="Minimize">
              <svg width="10" height="12" aria-hidden="true"><path d="M0 9h10v3H0z" /></svg>
            </CaptionButton>
            <CaptionButton aria-label="Maximize">
              <svg width="10" height="8" aria-hidden="true"><path d="M1 1h8v6H1z" fill="none" stroke="#000" strokeWidth="2" /></svg>
            </CaptionButton>
            <CaptionButton $wide aria-label="Close"><CrossMark size={9} /></CaptionButton>
          </CaptionButtons>
        </TitleBar>

        <Client>
          <MenuBar>
            <svg width="14" height="15" viewBox="0 0 14 15" aria-hidden="true">
              <rect x="0.500" y="0.500" width="10" height="9" fill="#e6f3ff" stroke="#5a94d0" />
              <rect x="3.500" y="4.500" width="10" height="9" fill="#f4faff" stroke="#5a94d0" />
              <path d="M5 8l2 3 2-4 2 4 1-2" fill="none" stroke="#4a86c8" />
            </svg>
            {["File", "View", "Insert", "Charts", "Tools", "Window", "Help"].map((m) => (
              <MenuItem key={m}>{m}</MenuItem>
            ))}
            <ChildButtons>
              <ChildButton aria-label="Minimize chart">
                <svg width="8" height="8" aria-hidden="true"><path d="M1 6h6v2H1z" /></svg>
              </ChildButton>
              <ChildButton aria-label="Restore chart">
                <svg width="9" height="9" viewBox="0 0 9 9" aria-hidden="true">
                  <path d="M3 3V1h5v4H6M1 4h5v4H1zM1 5h5M3 2h5" fill="none" stroke="#000" />
                </svg>
              </ChildButton>
              <ChildButton aria-label="Close chart"><CrossMark size={8} /></ChildButton>
            </ChildButtons>
          </MenuBar>

          <ToolRow>
            <ToolGroup>
              <Grip />
              <MenuTool icon="newChart" name="New chart" />
              <MenuTool icon="profiles" name="Profiles" />
              <Divider />
              <Tool icon="watch" name="Market Watch" on />
              <Tool icon="navigator" name="Data Window" />
              <Tool icon="favorites" name="Navigator" />
              <Tool icon="terminal" name="Terminal" on />
              <Tool icon="tester" name="Strategy Tester" />
              <Divider />
              <ToolButton $label={83}><Icon name="order" size={16} />New Order</ToolButton>
              <Tool icon="gold" name="MetaEditor" />
              <Tool icon="cloud" name="Cloud" />
              <Tool icon="signal" name="Signals" />
              <ToolButton $label={96}><Icon name="robot" size={17} />AutoTrading</ToolButton>
            </ToolGroup>
            <ToolGroup>
              <Grip />
              <Tool icon="bars" name="Bar chart" />
              <Tool icon="candles" name="Candlesticks" on />
              <Tool icon="line" name="Line chart" />
              <Divider $after={2} />
              <Tool icon="zoomIn" name="Zoom in" />
              <Tool icon="zoomOut" name="Zoom out" />
              <Tool icon="tiles" name="Tile windows" />
              <Divider />
              <Tool icon="scroll" name="Auto scroll" />
              <Tool icon="shift" name="Chart shift" />
              <Divider $after={2} />
              <MenuTool icon="indicator" name="Indicators" />
              <MenuTool icon="clock" name="Periods" />
              <MenuTool icon="template" name="Templates" />
            </ToolGroup>
            <ToolsEnd>
              <button aria-label="Search"><Icon name="search" size={16} /></button>
              <button aria-label="Chat"><Icon name="chat" size={22} /></button>
            </ToolsEnd>
          </ToolRow>

          <ToolRow>
            <ToolGroup>
              <Grip />
              <Tool icon="pointer" name="Cursor" on />
              <Tool icon="cross" name="Crosshair" />
              <Divider $after={3} />
              <Tool icon="vline" name="Vertical line" />
              <Tool icon="hline" name="Horizontal line" />
              <Tool icon="trend" name="Trendline" />
              <Tool icon="channel" name="Equidistant channel" />
              <Tool icon="fibo" name="Fibonacci retracement" />
              <Tool icon="text" name="Text" />
              <Tool icon="label" name="Text label" />
              <MenuTool icon="arrows" name="Arrows" />
            </ToolGroup>
            <ToolGroup>
              <Grip />
              {["M1", "M5", "M15", "M30", "H1", "H4", "D1", "W1", "MN"].map((p) => (
                <PeriodButton key={p} $on={p === "H1"}>{p}</PeriodButton>
              ))}
            </ToolGroup>
          </ToolRow>

          <Workspace>
            <MarketWatch />
            <Chart />
          </Workspace>

          <Terminal />

          <StatusBar>
            <StatusCell>For Help, press F1</StatusCell>
            <StatusCell $width={117}>Default</StatusCell>
            {STATUS_WIDTHS.map((w) => (
              <StatusCell key={w} $width={w} />
            ))}
            <StatusCell $width={149}>
              <svg width="23" height="13" viewBox="0 0 23 13" aria-hidden="true">
                {[0, 3, 6, 9, 12, 15, 18, 21].map((x, i) => (
                  <g key={x}>
                    <rect x={x} y="0" width="2" height={8 - i} fill="#6f8a12" />
                    <rect x={x} y={9 - i} width="2" height={4 + i} fill="#0f4a7c" />
                  </g>
                ))}
              </svg>
              2277/6 kb
              <ResizeHandle width="15" height="15" viewBox="0 0 15 15" aria-hidden="true">
                <path d="M0 15L15 0M4 15L15 4M8 15l7-7M12 15l3-3" stroke="#9a9a9a" strokeWidth="1.500" />
              </ResizeHandle>
            </StatusCell>
          </StatusBar>

          <Watermark aria-hidden="true">
            <svg width="78" height="78" viewBox="0 0 78 78">
              <rect width="78" height="78" rx="16" fill="#fff" fillOpacity="0.5" />
              <circle cx="39" cy="39" r="24" fill="none" stroke="#fff" strokeWidth="10" />
            </svg>
            <span>WikiFX</span>
          </Watermark>
        </Client>
      </AppWindow>
    </>
  );
}
